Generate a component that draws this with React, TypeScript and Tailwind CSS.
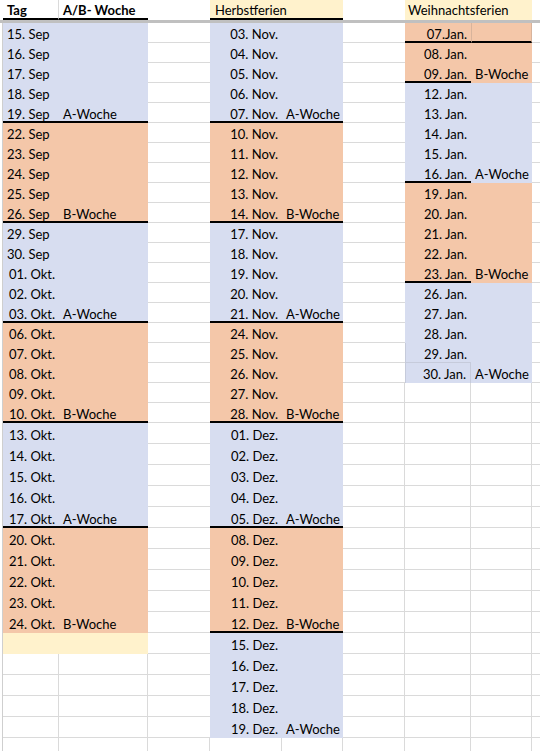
import React from "react";

type Cell = {
  text?: string;
  bg?: string;
  right?: boolean;
  thick?: boolean;
  extra?: string;
};

const BLUE = "bg-[#d7ddf0]";
const ORANGE = "bg-[#f4c7a9]";
const YELLOW = "bg-[#fff2cc]";

const COLS =
  "grid grid-cols-[56px_89px_62px_72px_61px_62px_66px_61px_1fr]";

const ROWS = 36;

type Week = { bg: string; days: string[]; label: string; thick: boolean };

const sepOkt: Week[] = [
  { bg: BLUE, days: ["15. Sep", "16. Sep", "17. Sep", "18. Sep", "19. Sep"], label: "A-Woche", thick: true },
  { bg: ORANGE, days: ["22. Sep", "23. Sep", "24. Sep", "25. Sep", "26. Sep"], label: "B-Woche", thick: true },
  { bg: BLUE, days: ["29. Sep", "30. Sep", "01. Okt.", "02. Okt.", "03. Okt."], label: "A-Woche", thick: true },
  { bg: ORANGE, days: ["06. Okt.", "07. Okt.", "08. Okt.", "09. Okt.", "10. Okt."], label: "B-Woche", thick: true },
  { bg: BLUE, days: ["13. Okt.", "14. Okt.", "15. Okt.", "16. Okt.", "17. Okt."], label: "A-Woche", thick: true },
  { bg: ORANGE, days: ["20. Okt.", "21. Okt.", "22. Okt.", "23. Okt.", "24. Okt."], label: "B-Woche", thick: false },
];

const novDez: Week[] = [
  { bg: BLUE, days: ["03. Nov.", "04. Nov.", "05. Nov.", "06. Nov.", "07. Nov."], label: "A-Woche", thick: true },
  { bg: ORANGE, days: ["10. Nov.", "11. Nov.", "12. Nov.", "13. Nov.", "14. Nov."], label: "B-Woche", thick: true },
  { bg: BLUE, days: ["17. Nov.", "18. Nov.", "19. Nov.", "20. Nov.", "21. Nov."], label: "A-Woche", thick: true },
  { bg: ORANGE, days: ["24. Nov.", "25. Nov.", "26. Nov.", "27. Nov.", "28. Nov."], label: "B-Woche", thick: true },
  { bg: BLUE, days: ["01. Dez.", "02. Dez.", "03. Dez.", "04. Dez.", "05. Dez."], label: "A-Woche", thick: true },
  { bg: ORANGE, days: ["08. Dez.", "09. Dez.", "10. Dez.", "11. Dez.", "12. Dez."], label: "B-Woche", thick: true },
  { bg: BLUE, days: ["15. Dez.", "16. Dez.", "17. Dez.", "18. Dez.", "19. Dez."], label: "A-Woche", thick: false },
];

const jan: Week[] = [
  { bg: ORANGE, days: ["08. Jan.", "09. Jan."], label: "B-Woche", thick: true },
  { bg: BLUE, days: ["12. Jan.", "13. Jan.", "14. Jan.", "15. Jan.", "16. Jan."], label: "A-Woche", thick: true },
  { bg: ORANGE, days: ["19. Jan.", "20. Jan.", "21. Jan.", "22. Jan.", "23. Jan."], label: "B-Woche", thick: true },
  { bg: BLUE, days: ["26. Jan.", "27. Jan.", "28. Jan.", "29. Jan.", "30. Jan."], label: "A-Woche", thick: false },
];

function buildGrid() {
  const g: Cell[][] = Array.from({ length: ROWS }, () =>
    Array.from({ length: 9 }, () => ({}))
  );

  // weeks into a pair of columns; thickBoth = black line under both columns
  const put = (weeks: Week[], start: number, col: number, thickBoth: boolean) => {
    let r = start;
    weeks.forEach((w) => {
      w.days.forEach((d, i) => {
        const last = i === w.days.length - 1;
        g[r][col] = {
          text: d,
          bg: w.bg,
          right: !d.endsWith("Sep"),
          thick: last && w.thick,
        };
        g[r][col + 1] = {
          text: last ? w.label : undefined,
          bg: w.bg,
          thick: last && w.thick && thickBoth,
        };
        r++;
      });
    });
    return r;
  };

  const end = put(sepOkt, 0, 0, true);
  g[end][0] = { bg: YELLOW };
  g[end][1] = { bg: YELLOW };

  put(novDez, 0, 3, true);

  g[0][6] = { text: "07.Jan.", bg: ORANGE, right: true, thick: true };
  g[0][7] = { bg: ORANGE, thick: true, extra: "border-l border-l-[#d8b49c] border-r border-r-[#d8b49c]" };
  put(jan, 1, 6, false);
  g[16][6].extra = "border-l border-l-[#c6cbdb] border-b border-b-[#c6cbdb]";
  g[17][6].extra = "border-l border-l-[#c6cbdb] border-r border-r-[#c6cbdb]";

  return g;
}

const grid = buildGrid();

function SheetCell({ cell, r, c }: { cell: Cell; r: number; c: number }) {
  const below = grid[r + 1]?.[c];
  const rightCell = grid[r][c + 1];
  const white = !cell.bg;
  const cls = [
    "flex items-end px-1 leading-none whitespace-nowrap overflow-visible",
    cell.bg ?? "bg-white",
    cell.right ? "justify-end" : "",
  ];

  if (cell.thick) {
    cls.push("border-b-2 border-b-black pb-0");
  } else if (white && (!below || !below.bg)) {
    cls.push("border-b border-b-[#dadada] pb-[1px]");
  } else if (cell.extra && cell.extra.includes("border-b ")) {
    cls.push("pb-[1px]");
  } else {
    cls.push("pb-[2px]");
  }
  if (white && rightCell && !rightCell.bg) cls.push("border-r border-r-[#dadada]");
  if (cell.extra) cls.push(cell.extra);

  return <div className={cls.join(" ")}>{cell.text}</div>;
}

export default function App() {
  return (
    <div className="w-[540px] h-[751px] overflow-hidden bg-white text-black text-[13px] font-['Lato',sans-serif]">
      {/* header row */}
      <div className={`${COLS} h-[20px] pl-[3px]`}>
        <div className="flex items-end px-1 pb-[1px] leading-none font-bold border-b-2 border-b-black border-r border-r-[#dadada]">
          Tag
        </div>
        <div className="flex items-end px-1 pb-[1px] leading-none font-bold border-b-2 border-b-black">
          A/B- Woche
        </div>
        <div />
        <div className={`col-span-2 flex items-end pl-[5px] pb-[1px] leading-none border-b-2 border-b-black ${YELLOW}`}>
          Herbstferien
        </div>
        <div />
        <div className={`col-span-2 flex items-end pl-[3px] pb-[3px] leading-none ${YELLOW}`}>
          Weihnachtsferien
        </div>
        <div />
      </div>

      {/* frozen pane line */}
      <div className="h-[3px] bg-[#c0c0c0]" />

      <div className="ml-[2px] border-l border-l-[#cfcfcf]">
        {grid.map((row, r) => (
          <div key={r} className={`${COLS} ${r < 20 ? "h-[20px]" : "h-[21px]"}`}>
            {row.map((cell, c) => (
              <SheetCell key={c} cell={cell} r={r} c={c} />
            ))}
          </div>
        ))}
      </div>
    </div>
  );
}
